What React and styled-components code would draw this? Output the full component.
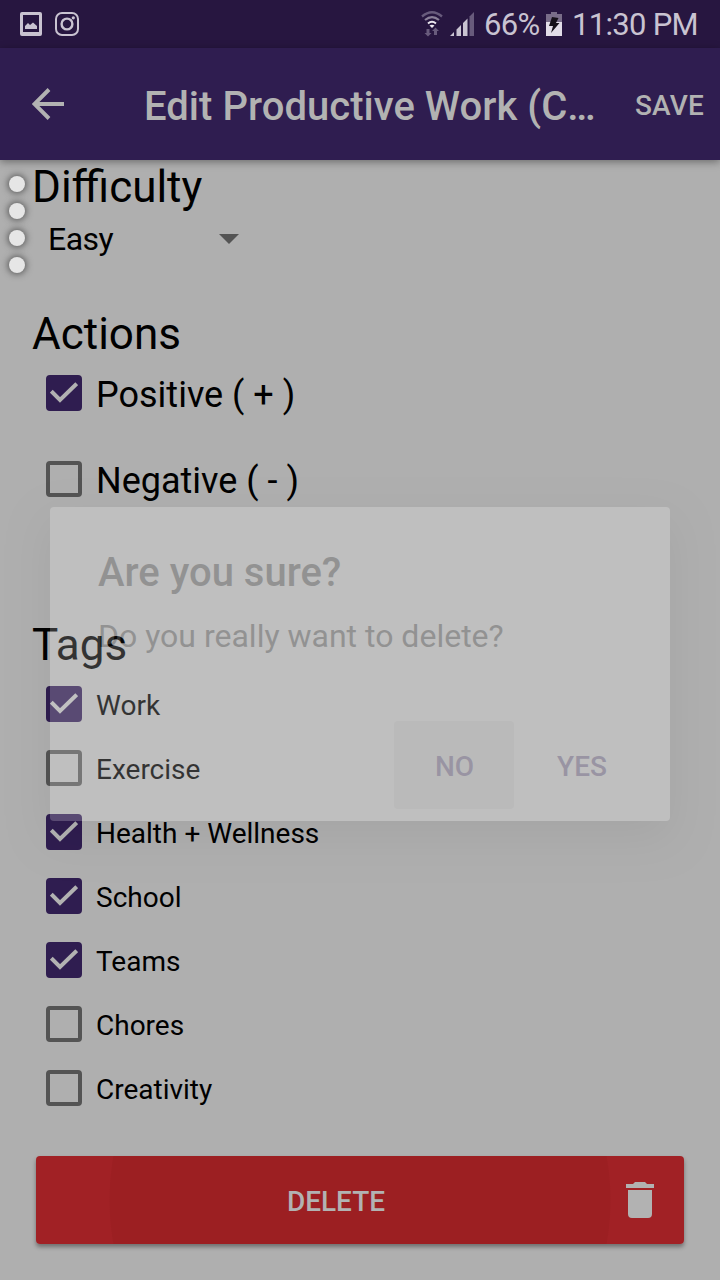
import React from 'react';
import styled, { createGlobalStyle } from 'styled-components';

const Global = createGlobalStyle`
  * { box-sizing: border-box; }
  body { margin: 0; background: #afafaf; }
  button { border: 0; padding: 0; margin: 0; font: inherit; }
`;

const Screen = styled.div`
  position: relative;
  display: flex;
  flex-direction: column;
  width: 720px;
  height: 1280px;
  overflow: hidden;
  background: #afafaf;
  color: #000;
  font-family: Roboto, 'Noto Sans', sans-serif;
  white-space: nowrap;
`;

const StatusBar = styled.header`
  display: flex;
  justify-content: space-between;
  height: 48px;
  padding: 0 22px 0 20px;
  background: #271640;
  color: #c9c3d1;
  font-size: 31px;
  line-height: 49px;
`;

const StatusGroup = styled.div`
  display: flex;
`;

const StatusText = styled.span`
  width: ${(p) => p.$width}px;
  margin-left: ${(p) => p.$gap}px;
  letter-spacing: ${(p) => p.$spacing || 0}px;
`;

const Glyph = styled.svg`
  display: block;
  flex: none;
  margin-left: ${(p) => p.$gap || 0}px;
  margin-top: ${(p) => p.$top || 0}px;
`;

const AppBar = styled.nav`
  position: relative;
  display: flex;
  flex: none;
  height: 112px;
  padding: 0 16px 0 32px;
  background: #2f1d50;
  color: #b2b2b2;
  box-shadow: 0 2px 8px rgba(0, 0, 0, 0.38);
`;

const Title = styled.h1`
  flex: 1;
  margin: 0 0 0 80px;
  font-size: 40px;
  font-weight: 500;
  letter-spacing: 0.04px;
  line-height: 117px;
`;

const SaveButton = styled.button`
  background: none;
  color: inherit;
  font-size: 28px;
  font-weight: 500;
  letter-spacing: 0.2px;
  line-height: 115px;
`;

const Form = styled.main`
  display: flex;
  flex: 1;
  flex-direction: column;
  padding: 1px 36px 36px 32px;
`;

const Heading = styled.h2`
  margin: ${(p) => p.$top || 0}px 0 0;
  font-size: 44px;
  font-weight: 400;
  line-height: 52px;
`;

const Select = styled.div`
  display: flex;
  align-items: center;
  justify-content: space-between;
  width: 207px;
  height: 40px;
  margin-top: 6px;
  padding-left: 16px;
  font-size: 32px;
  letter-spacing: -0.5px;
`;

const Options = styled.div`
  display: flex;
  flex-direction: column;
  gap: ${(p) => p.$gap}px;
  margin-top: ${(p) => p.$top}px;
  padding-left: 14px;
  font-size: ${(p) => p.$size}px;
  line-height: ${(p) => p.$line}px;
`;

const Option = styled.label`
  display: flex;
  gap: 14px;
  height: 36px;
`;

const Box = styled.span`
  flex: none;
  width: 36px;
  height: 36px;
  border: 4px solid ${(p) => (p.$on ? '#2f1d50' : '#545454')};
  border-radius: 4px;
  background: ${(p) => (p.$on ? '#2f1d50' : 'transparent')};
`;

const DeleteButton = styled.button`
  display: flex;
  flex: none;
  align-items: center;
  height: 88px;
  margin: auto 0 0 4px;
  padding-right: 30px;
  border-radius: 4px;
  background: radial-gradient(circle 251px at 324px 44px, #9c1f22 250px, #a12125 251px);
  box-shadow: 0 3px 4px rgba(0, 0, 0, 0.36);
  color: #b2b2b2;
  font-size: 28px;
  font-weight: 500;
`;

const DeleteLabel = styled.span`
  flex: 1;
  padding: 2px 0 0 10px;
`;

const DragDots = styled.div`
  position: absolute;
  top: 176px;
  left: 9px;
  display: flex;
  flex-direction: column;
  gap: 11px;
`;

const Dot = styled.i`
  width: 16px;
  height: 16px;
  border-radius: 50%;
  background: #e6e6e6;
  box-shadow: 0 0 7px 1px rgba(0, 0, 0, 0.55);
`;

const Dialog = styled.section`
  position: absolute;
  top: 507px;
  left: 50px;
  display: flex;
  flex-direction: column;
  width: 620px;
  height: 314px;
  padding: 42px 28px 12px 48px;
  border-radius: 4px;
  background: #fff;
  box-shadow: 0 16px 44px rgba(0, 0, 0, 0.28);
  color: #212121;
  opacity: 0.2;
`;

const DialogTitle = styled.h3`
  margin: 0;
  font-size: 40px;
  font-weight: 500;
  line-height: 48px;
`;

const DialogText = styled.p`
  margin: 19px 0 0;
  font-size: 32px;
  line-height: 40px;
`;

const DialogActions = styled.div`
  display: flex;
  justify-content: flex-end;
  gap: 8px;
  margin-top: auto;
`;

const DialogButton = styled.button`
  width: 120px;
  height: 88px;
  padding: 2px 0 0 ${(p) => (p.$pressed ? 1 : 0)}px;
  border-radius: 4px;
  background: ${(p) => (p.$pressed ? '#e9e9e9' : 'transparent')};
  color: #432b74;
  font-size: 28px;
  font-weight: 500;
`;

const Check = () => (
  <svg width="28" height="28" viewBox="0 0 28 28" fill="none" style={{ display: 'block' }}>
    <path d="M1.300 12.200 10 20.900 26.700 4.700" stroke="#b2b2b2" strokeWidth="4" />
  </svg>
);

const CheckOption = ({ label, on }) => (
  <Option>
    <Box $on={on}>{on && <Check />}</Box>
    {label}
  </Option>
);

const ACTIONS = [
  { label: 'Positive ( + )', on: true },
  { label: 'Negative ( - )', on: false },
];

const TAGS = [
  { label: 'Work', on: true },
  { label: 'Exercise', on: false },
  { label: 'Health + Wellness', on: true },
  { label: 'School', on: true },
  { label: 'Teams', on: true },
  { label: 'Chores', on: false },
  { label: 'Creativity', on: false },
];

export default function App() {
  return (
    <>
      <Global />
      <Screen>
        <StatusBar>
          <StatusGroup>
            <Glyph $top={12} width="22" height="24" viewBox="0 0 22 24">
              <path
                fill="#c9c3d1"
                fillRule="evenodd"
                d="M2 0H20Q22 0 22 2V22Q22 24 20 24H2Q0 24 0 22V2Q0 0 2 0ZM3 3V20H19V3Z"
              />
              <path fill="#c9c3d1" d="M5 17V14L8 11 10 13 13 10.5 17 14V17Z" />
            </Glyph>
            <Glyph $top={12} $gap={13} width="24" height="24" viewBox="0 0 24 24" fill="none" stroke="#c9c3d1">
              <rect x="1" y="1" width="22" height="22" rx="6" strokeWidth="2" />
              <circle cx="12" cy="12" r="5.4" strokeWidth="2.4" />
              <circle cx="18.3" cy="5.8" r="1.6" fill="#c9c3d1" stroke="none" />
            </Glyph>
          </StatusGroup>
          <StatusGroup>
            <Glyph $top={11} width="22" height="26" viewBox="0 0 22 26" fill="none">
              <path d="M1 5.5Q11-3 21 5.5" stroke="#685b7c" strokeWidth="2.3" />
              <path d="M4 9Q11 3.200 18 9" stroke="#8b8099" strokeWidth="2.2" />
              <path d="M7 12.500Q11 9 15 12.500" stroke="#ece8f0" strokeWidth="2" />
              <path d="M8.500 14.500Q11 13 13.500 14.500L11 17Z" fill="#ece8f0" />
              <path d="M5.500 18H8.500V22H10.500L7 25.500 3.500 22H5.500ZM13 24H16V20H18L14.500 16.500 11 20H13Z" fill="#685b7c" />
            </Glyph>
            <Glyph $top={12} $gap={7} width="24" height="24" viewBox="0 0 24 24">
              <path d="M0 24 4 20V24ZM6.500 17.500 11 13V24H6.500ZM13 11 17.500 6.500V24H13Z" fill="#c9c3d1" />
              <path d="M19.500 4.500 24 0V24H19.500Z" fill="#685b7c" />
            </Glyph>
            <StatusText $gap={10} $width={62} $spacing={-0.7}>66%</StatusText>
            <Glyph $top={12} $gap={0} width="16" height="24" viewBox="0 0 16 24">
              <path d="M0 2H5V0H11V2H16V10H0Z" fill="#796d89" />
              <path d="M0 10H16V24H0Z" fill="#e2dde8" />
              <path d="M6 5 12.500 6 10 11H13.500L5 21 7 14H3Z" fill="#151019" />
            </Glyph>
            <StatusText $gap={10} $width={126} $spacing={-0.7}>11:30 PM</StatusText>
          </StatusGroup>
        </StatusBar>
        <AppBar>
          <Glyph $top={40} width="32" height="32" viewBox="0 0 32 32" fill="none">
            <path d="M32 16H4M17 1.500 2.500 16 17 30.500" stroke="#b2b2b2" strokeWidth="3.900" />
          </Glyph>
          <Title>Edit Productive Work (C…</Title>
          <SaveButton>SAVE</SaveButton>
        </AppBar>
        <Form>
          <Heading>Difficulty</Heading>
          <Select>
            Easy
            <svg width="20" height="10" viewBox="0 0 20 10">
              <path d="M0 0H20L10 10Z" fill="#545454" />
            </svg>
          </Select>
          <Heading $top={49}>Actions</Heading>
          <Options $top={15} $gap={50} $size={36} $line={40}>
            {ACTIONS.map((item) => <CheckOption key={item.label} {...item} />)}
          </Options>
          <Heading $top={122}>Tags</Heading>
          <Options $top={15} $gap={28} $size={28} $line={39}>
            {TAGS.map((item) => <CheckOption key={item.label} {...item} />)}
          </Options>
          <DeleteButton>
            <DeleteLabel>DELETE</DeleteLabel>
            <svg width="28" height="36" viewBox="0 0 28 36" fill="#b2b2b2">
              <path d="M0 2H7L9 0H19L21 2H28V6H0ZM2 8H26V32Q26 36 22 36H6Q2 36 2 32Z" />
            </svg>
          </DeleteButton>
        </Form>
        <DragDots>
          <Dot /><Dot /><Dot /><Dot />
        </DragDots>
        <Dialog role="dialog">
          <DialogTitle>Are you sure?</DialogTitle>
          <DialogText>Do you really want to delete?</DialogText>
          <DialogActions>
            <DialogButton $pressed>NO</DialogButton>
            <DialogButton>YES</DialogButton>
          </DialogActions>
        </Dialog>
      </Screen>
    </>
  );
}
